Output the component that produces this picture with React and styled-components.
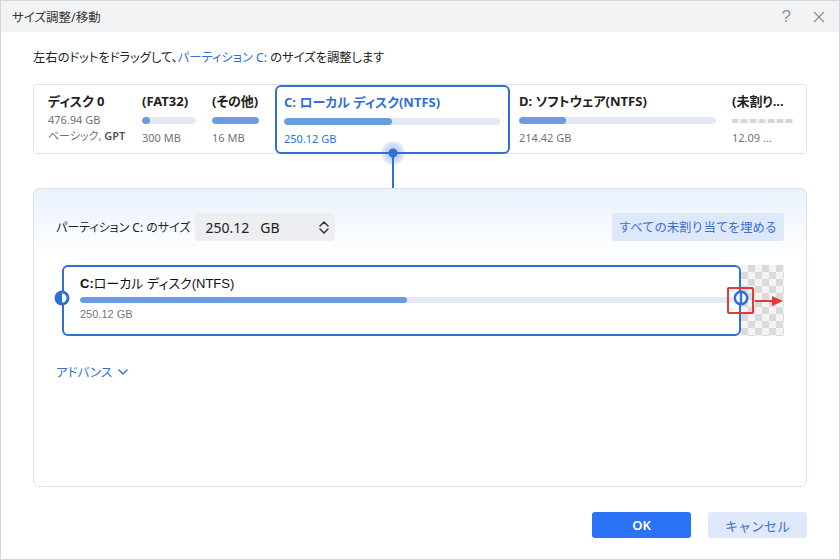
import React from 'react';
import styled, { createGlobalStyle } from 'styled-components';

const GlobalStyle = createGlobalStyle`
  html, body {
    margin: 0;
    padding: 0;
    background: #ffffff;
  }
  body {
    font-family: "Noto Sans", "Noto Sans CJK JP", sans-serif;
    font-feature-settings: "palt";
    color: #222;
  }
  * { box-sizing: border-box; }
`;

const BLUE = '#2f6fd6';
const FILL = '#6b9be3';
const TRACK = '#e2e9f5';

const partitions = [
  { key: 'fat', name: '(FAT32)', size: '300 MB', pct: 15, width: 70 },
  { key: 'other', name: '(その他)', size: '16 MB', pct: 100, width: 63 },
  { key: 'c', name: 'C: ローカル ディスク(NTFS)', size: '250.12 GB', pct: 50, width: 235, selected: true },
  { key: 'd', name: 'D: ソフトウェア(NTFS)', size: '214.42 GB', pct: 24, width: 213 },
  { key: 'un', name: '(未割り...', size: '12.09 ...', unallocated: true, width: 66 },
];

const Window = styled.div`
  width: 840px;
  height: 560px;
  border: 1px solid #d3d6db;
  display: flex;
  flex-direction: column;
  background: #fff;
`;

const TitleBar = styled.div`
  height: 31px;
  flex: none;
  background: #f2f3f5;
  display: flex;
  align-items: center;
  justify-content: space-between;
  padding: 0 14px 0 11px;
  font-size: 12.5px;
  color: #333;
`;

const TitleTools = styled.div`
  display: flex;
  align-items: center;
  gap: 22px;
  color: #8a8d92;
`;

const Help = styled.span`
  font-family: "Liberation Sans", sans-serif;
  font-size: 17px;
  font-weight: 300;
  color: #909398;
`;

const Content = styled.div`
  flex: 1;
  display: flex;
  flex-direction: column;
  padding: 0 32px 0 32px;
`;

const Instruction = styled.div`
  margin-top: 17px;
  font-size: 12.3px;
  line-height: 18px;
  color: #222;
`;

const Accent = styled.span`
  color: ${BLUE};
`;

const DiskStrip = styled.div`
  margin-top: 17px;
  height: 70px;
  border: 1px solid #e1e4e8;
  border-radius: 4px;
  display: flex;
  padding-left: 14px;
`;

const DiskInfo = styled.div`
  width: 94px;
  padding-top: 7px;
  display: flex;
  flex-direction: column;
`;

const Name = styled.div`
  font-size: 13px;
  line-height: 18px;
  font-weight: 700;
  color: ${(p) => (p.$selected ? BLUE : '#222')};
  white-space: nowrap;
`;

const Meta = styled.div`
  font-size: 11px;
  line-height: 15px;
  color: ${(p) => (p.$blue ? BLUE : '#6f7378')};
  white-space: nowrap;
`;

const DiskMeta = styled(Meta)`
  margin-top: ${(p) => p.$mt || 0}px;
  b { font-weight: 600; color: #555; }
`;

const Part = styled.div`
  position: relative;
  width: ${(p) => p.$w}px;
  flex: none;
  padding: ${(p) => (p.$selected ? '6px 8px 0 7px' : `7px ${p.$last ? 4 : 16}px 0 0`)};
  margin: ${(p) => (p.$selected ? '0 9px -1px 0' : '0')};
  border: ${(p) => (p.$selected ? `2px solid ${BLUE}` : 'none')};
  border-radius: 6px;
  display: flex;
  flex-direction: column;
`;

const Bar = styled.div`
  height: 7px;
  margin: 7px 0 6px;
  border-radius: 4px;
  background: ${TRACK};
  overflow: hidden;
`;

const BarFill = styled.div`
  height: 100%;
  border-radius: 4px;
  background: ${FILL};
`;

const DashedBar = styled.div`
  height: 4px;
  margin: 9px 0 7px;
  background: repeating-linear-gradient(90deg, #d4d6da 0 6px, #eef0f2 6px 9px);
`;

const Knob = styled.div`
  position: absolute;
  left: 50%;
  bottom: -13px;
  width: 24px;
  height: 24px;
  margin-left: -12px;
  border-radius: 50%;
  background: radial-gradient(circle, ${BLUE} 0 4px, rgba(47, 111, 214, 0.32) 5px, rgba(47, 111, 214, 0.1) 12px);
  z-index: 2;
`;

const Connector = styled.div`
  height: 34px;
  width: 2px;
  margin-left: 359px;
  background: ${BLUE};
`;

const Panel = styled.div`
  height: 299px;
  border: 1px solid #dde3ec;
  border-radius: 6px;
  background: linear-gradient(180deg, #eaf2fd 0px, #ffffff 70px);
  padding: 24px 22px 0 22px;
  display: flex;
  flex-direction: column;
`;

const SizeRow = styled.div`
  display: flex;
  align-items: center;
`;

const SizeLabel = styled.span`
  font-size: 12px;
  color: #222;
  margin-right: 5px;
`;

const SpinBox = styled.div`
  width: 140px;
  height: 28px;
  border-radius: 4px;
  background: #eceef1;
  display: flex;
  align-items: center;
  justify-content: space-between;
  padding: 0 6px 0 10px;
  font-size: 14px;
  color: #222;
  white-space: pre;
`;

const Spin = styled.div`
  display: flex;
  flex-direction: column;
  gap: 1px;
`;

const FillButton = styled.button`
  margin-left: auto;
  width: 172px;
  height: 28px;
  padding: 0;
  border: none;
  border-radius: 3px;
  background: #dde8fb;
  color: #3a6fd2;
  font-family: inherit;
  font-size: 12.3px;
`;

const PartitionRow = styled.div`
  display: flex;
  height: 71px;
  margin: 24px 0 0 6px;
`;

const PartitionBox = styled.div`
  position: relative;
  width: 679px;
  flex: none;
  border: 2px solid ${BLUE};
  border-radius: 6px;
  padding: 8px 6px 0 16px;
`;

const PartitionName = styled.div`
  font-family: "Liberation Sans", "Noto Sans CJK JP", sans-serif;
  font-size: 13px;
  line-height: 18px;
  color: #111;
  b { font-weight: 700; }
`;

const WideBar = styled(Bar)`
  height: 6px;
  margin: 4px 0 5px;
`;

const SizeNote = styled.div`
  font-family: "Liberation Sans", sans-serif;
  font-size: 11px;
  color: #777;
`;

const Checker = styled.div`
  flex: 1;
  background-color: #f4f4f4;
  background-image:
    linear-gradient(45deg, #dadada 25%, transparent 25%, transparent 75%, #dadada 75%),
    linear-gradient(45deg, #dadada 25%, transparent 25%, transparent 75%, #dadada 75%);
  background-size: 14px 14px;
  background-position: 0 0, 7px 7px;
`;

const Handle = styled.div`
  position: absolute;
  top: 23px;
  ${(p) => (p.$side === 'left' ? 'left: -10px;' : 'right: -10px;')}
  width: 16px;
  height: 16px;
  display: flex;
  align-items: center;
  justify-content: center;
  z-index: 2;
`;

const Marker = styled.div`
  position: absolute;
  top: 20px;
  right: -15px;
  width: 27px;
  height: 27px;
  border: 2px solid #e53935;
  border-radius: 2px;
  z-index: 1;
`;

const Arrow = styled.svg`
  position: absolute;
  top: 29px;
  right: -44px;
  z-index: 1;
`;

const Advance = styled.div`
  margin-top: 26px;
  display: flex;
  align-items: center;
  gap: 6px;
  font-size: 12.5px;
  color: #3a6fd2;
`;

const Footer = styled.div`
  display: flex;
  justify-content: flex-end;
  gap: 17px;
  margin-top: 25px;
`;

const Button = styled.button`
  width: 99px;
  height: 26px;
  border: none;
  border-radius: 3px;
  font-family: inherit;
  font-size: 13px;
  background: ${(p) => (p.$primary ? '#2a72f6' : '#e0e9fb')};
  color: ${(p) => (p.$primary ? '#ffffff' : '#3a6fd2')};
  font-weight: ${(p) => (p.$primary ? 600 : 400)};
`;

const CloseIcon = () => (
  <svg width="12" height="12" viewBox="0 0 12 12">
    <path d="M1 1L11 11M11 1L1 11" stroke="#8a8d92" strokeWidth="1.2" />
  </svg>
);

const Chevron = ({ up, color = '#333', size = 10 }) => (
  <svg width={size} height={size * 0.6} viewBox="0 0 10 6">
    <path
      d={up ? 'M1 5L5 1L9 5' : 'M1 1L5 5L9 1'}
      fill="none"
      stroke={color}
      strokeWidth="1.5"
      strokeLinecap="round"
      strokeLinejoin="round"
    />
  </svg>
);

const LeftGrip = () => (
  <svg width="16" height="16" viewBox="0 0 16 16">
    <circle cx="8" cy="8" r="7.5" fill="#2f6fd6" />
    <path d="M8 3.5 A4.5 4.5 0 0 1 8 12.5 Z" fill="#fff" />
  </svg>
);

const RightGrip = () => (
  <svg width="16" height="16" viewBox="0 0 16 16">
    <circle cx="8" cy="8" r="6.2" fill="#fff" stroke="#2f6fd6" strokeWidth="2.6" />
    <rect x="6.8" y="1" width="2.4" height="14" fill="#2f6fd6" />
  </svg>
);

export default function App() {
  return (
    <>
      <GlobalStyle />
      <Window>
        <TitleBar>
          <span>サイズ調整/移動</span>
          <TitleTools>
            <Help>?</Help>
            <CloseIcon />
          </TitleTools>
        </TitleBar>
        <Content>
          <Instruction>
            左右のドットをドラッグして、<Accent>パーティション C:</Accent> のサイズを調整します
          </Instruction>
          <DiskStrip>
            <DiskInfo>
              <Name>ディスク 0</Name>
              <DiskMeta $mt={2}>476.94 GB</DiskMeta>
              <DiskMeta $mt={1}>
                ベーシック, <b>GPT</b>
              </DiskMeta>
            </DiskInfo>
            {partitions.map((p) => (
              <Part key={p.key} $w={p.width} $selected={p.selected} $last={p.unallocated}>
                <Name $selected={p.selected}>{p.name}</Name>
                {p.unallocated ? (
                  <DashedBar />
                ) : (
                  <Bar>
                    <BarFill style={{ width: `${p.pct}%` }} />
                  </Bar>
                )}
                <Meta $blue={p.selected}>{p.size}</Meta>
                {p.selected && <Knob />}
              </Part>
            ))}
          </DiskStrip>
          <Connector />
          <Panel>
            <SizeRow>
              <SizeLabel>パーティション C: のサイズ</SizeLabel>
              <SpinBox>
                <span>250.12   GB</span>
                <Spin>
                  <Chevron up />
                  <Chevron />
                </Spin>
              </SpinBox>
              <FillButton>すべての未割り当てを埋める</FillButton>
            </SizeRow>
            <PartitionRow>
              <PartitionBox>
                <PartitionName>
                  <b>C:</b>ローカル ディスク(NTFS)
                </PartitionName>
                <WideBar>
                  <BarFill style={{ width: '50%' }} />
                </WideBar>
                <SizeNote>250.12 GB</SizeNote>
                <Handle $side="left">
                  <LeftGrip />
                </Handle>
                <Handle $side="right">
                  <RightGrip />
                </Handle>
                <Marker />
                <Arrow width="28" height="10" viewBox="0 0 28 10">
                  <path d="M0 5H19" stroke="#e53935" strokeWidth="2" />
                  <path d="M17 0L28 5L17 10Z" fill="#e53935" />
                </Arrow>
              </PartitionBox>
              <Checker />
            </PartitionRow>
            <Advance>
              アドバンス
              <Chevron color="#3a6fd2" size={10} />
            </Advance>
          </Panel>
          <Footer>
            <Button $primary>OK</Button>
            <Button>キャンセル</Button>
          </Footer>
        </Content>
      </Window>
    </>
  );
}
